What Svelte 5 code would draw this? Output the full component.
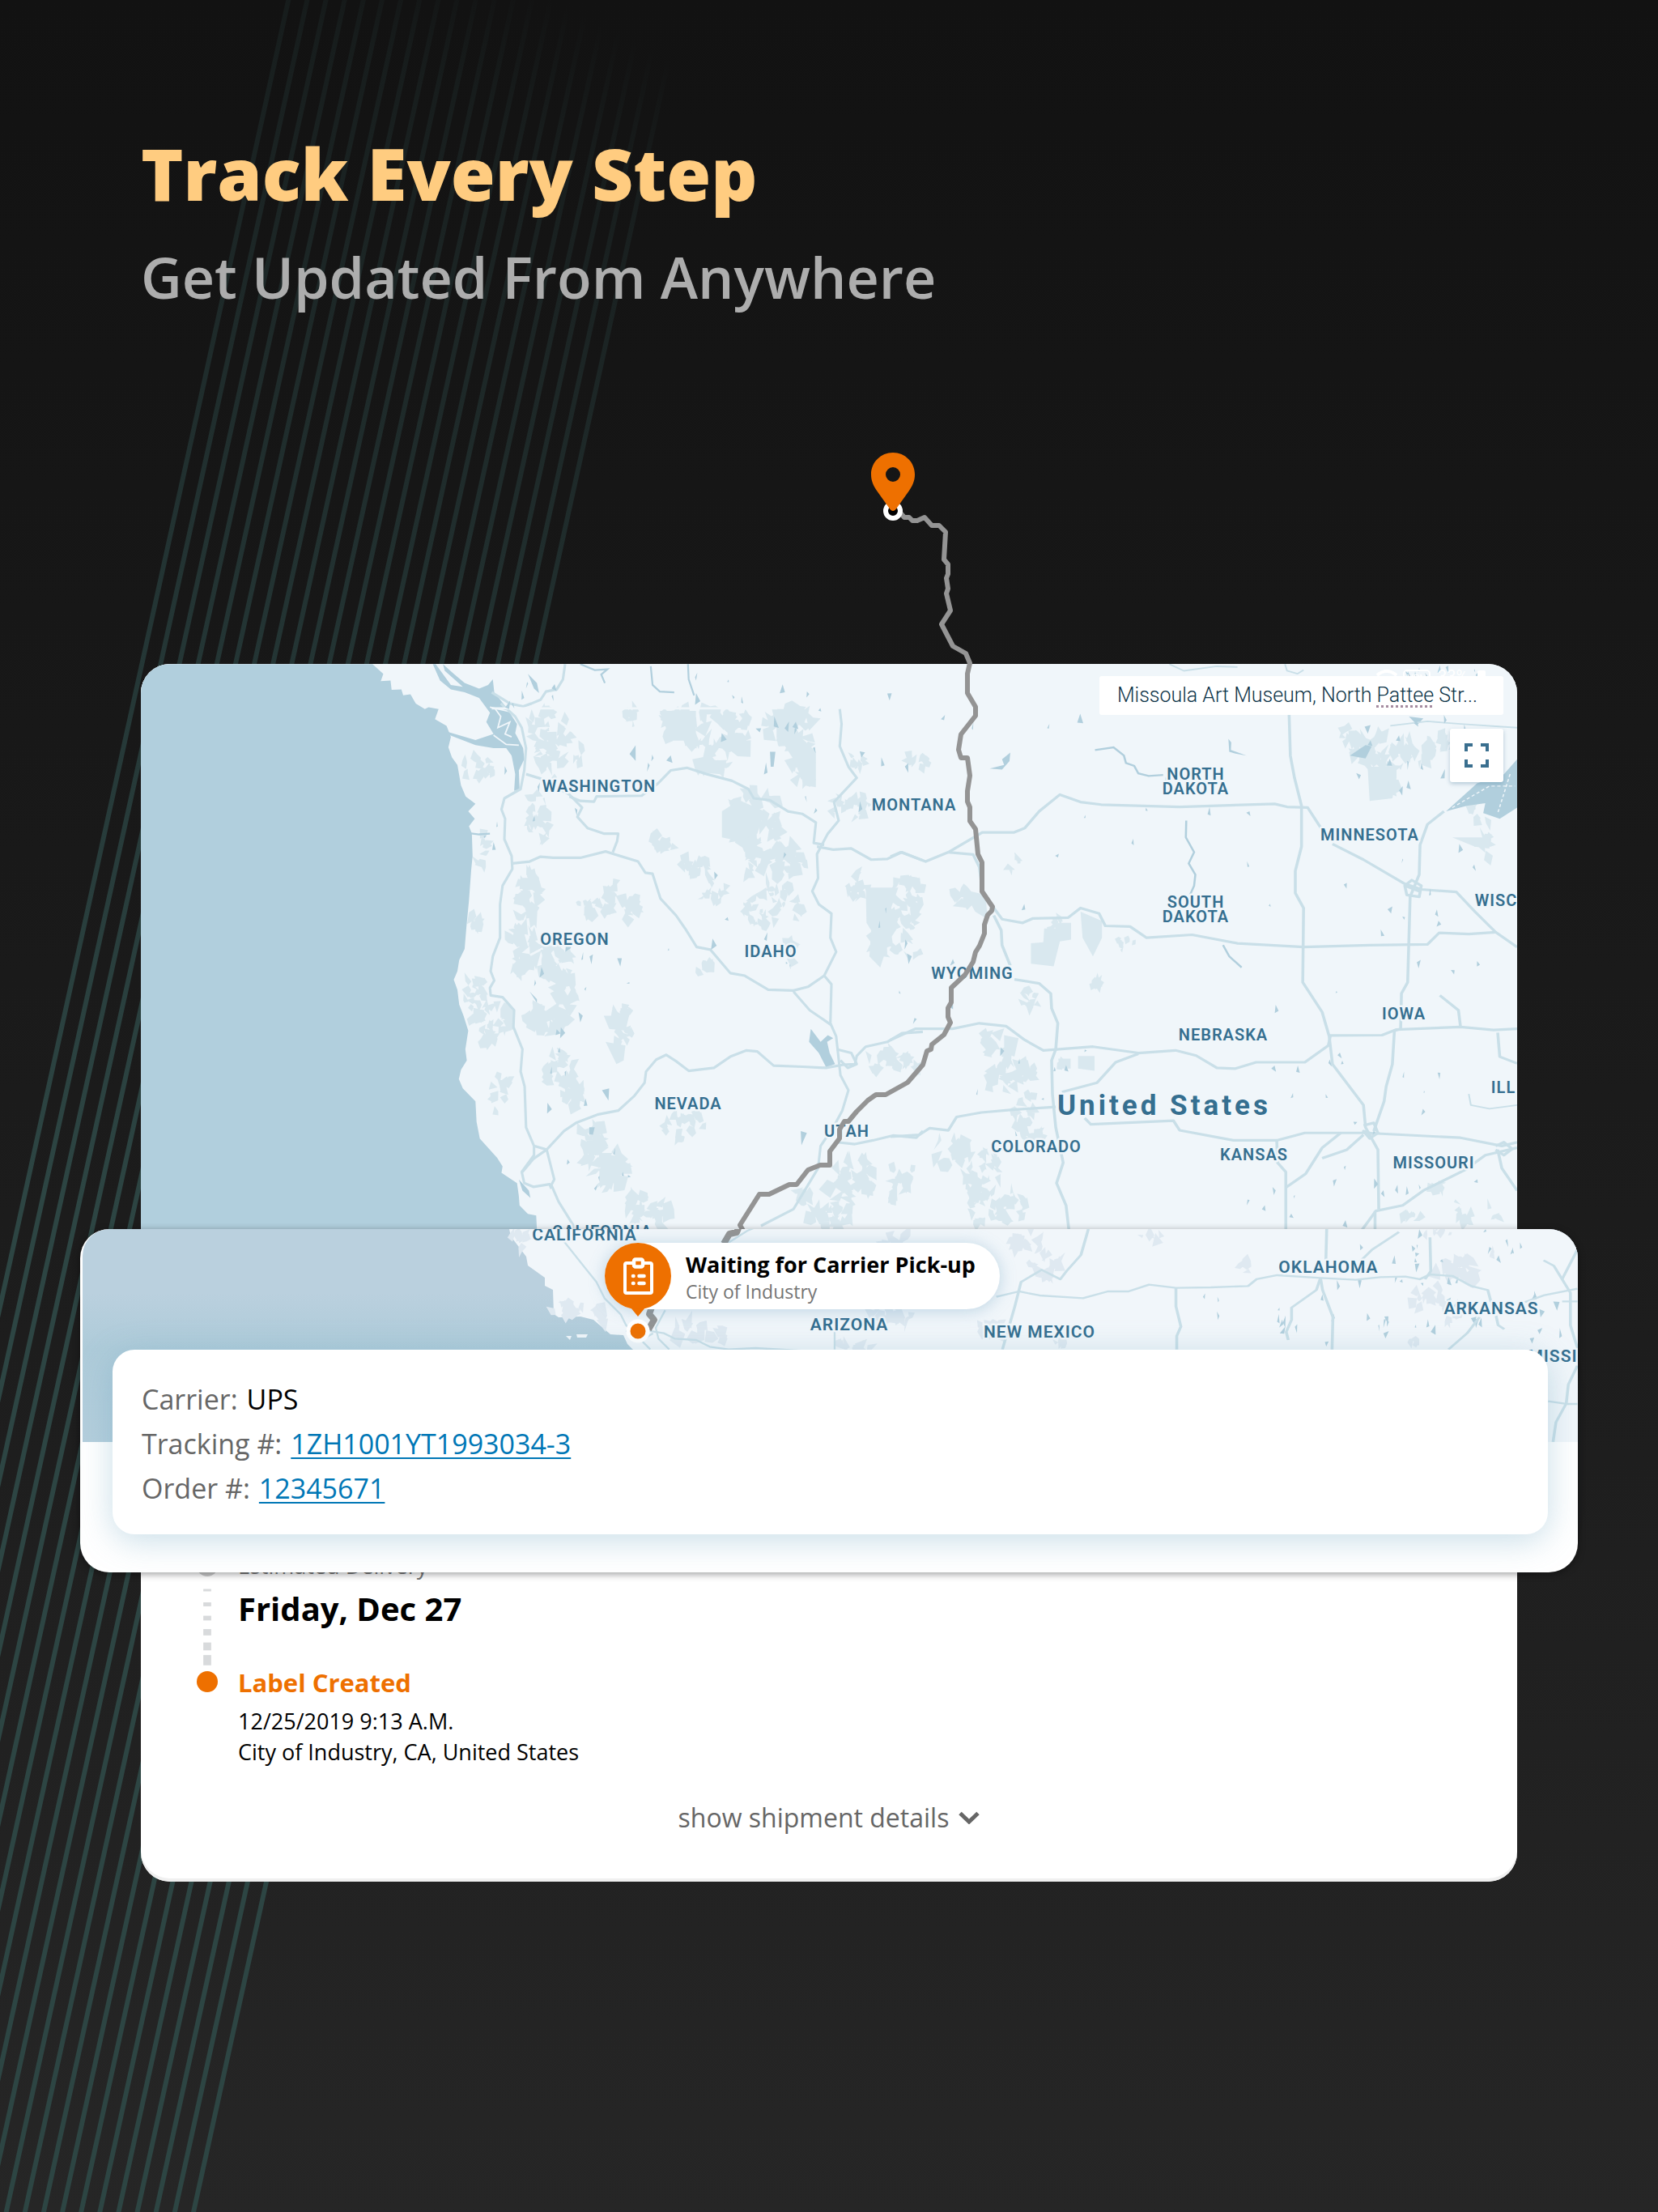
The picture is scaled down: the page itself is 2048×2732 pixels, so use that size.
<script>
  const shipment = {
    carrier: 'UPS',
    tracking: '1ZH1001YT1993034-3',
    order: '12345671',
    status: 'Waiting for Carrier Pick-up',
    city: 'City of Industry',
    estimate: 'Friday, Dec 27'
  };

  const stripes = Array.from({ length: 22 }, (_, i) => 842 - i * 23.13);
  const dashes = [[16, 3], [33, 5], [50, 6], [67, 8], [84, 10], [100, 13]];

  // road traces, one list for each map tile
  const westRoads = [
    '375,120 400,135 425,150 462,158 485,150 510,140 525,118 555,112 572,85 578,44',
    '400,150 440,185 458,215 470,270 465,330 455,380 410,405 402,435 412,460 410,515 430,560 432,595 405,640 398,690 398,780 378,830 372,870 382,895 370,915 372,935 405,940 437,975 435,1020 460,1080 455,1140 466,1180 470,1290 492,1340 527,1350',
    '470,340 510,352 590,395 625,430 612,455 640,485 685,500 725,500 722,520 710,550',
    '590,400 620,412 658,414 665,400 790,398 835,365 870,330 915,323 970,340 1040,358 1085,380 1100,405 1145,410 1195,440 1235,447 1272,470 1266,525 1295,530',
    '432,580 480,575 510,562 545,565 620,565 690,548 780,575 800,605 820,608 842,675 885,720 910,755 942,805 980,812 1035,875 1075,882 1140,920 1210,922 1250,912 1295,882',
    '1338,165 1343,205 1338,265 1362,320 1385,350 1322,415 1335,465 1305,500 1275,555 1278,620 1262,655 1280,690 1315,715 1312,780 1328,818 1295,882 1315,905 1312,1010 1328,1045 1340,1150 1362,1190 1345,1245 1320,1290 1285,1340 1278,1400 1210,1510 1120,1555',
    '1275,535 1320,543 1370,540 1425,570 1470,568 1510,550 1568,572',
    '1210,925 1255,975 1315,1015',
    '527,1350 575,1300 610,1277 670,1255 725,1245 770,1205 798,1170 802,1140 830,1108 858,1095 885,1112 920,1138 990,1130 1035,1100 1080,1083 1110,1086 1155,1124 1235,1127 1300,1130 1345,1122 1380,1120 1385,1098 1410,1073 1470,1060 1510,1037 1568,1033',
    '527,1350 548,1430 540,1445 560,1490 605,1560',
    '492,1340 492,1365 458,1410 465,1440 490,1450 535,1443 540,1455',
    '527,1350 490,1375 460,1410',
    '1330,1330 1380,1335 1430,1325 1485,1312 1550,1318 1568,1300',
    '1330,1080 1370,1090 1385,1120 1360,1130 1340,1110'
  ];
  const eastRoads = [
    '965,180 968,290 978,350 995,425 995,535 980,600 980,660 1000,700 998,900 1045,980 1062,1045 1070,1120 1145,1230 1150,1290 1180,1350 1182,1510',
    '140,550 222,497 298,497 325,485 360,440 410,395 460,415 510,422 700,428 930,420 960,428 1010,430 1045,490',
    '1070,528 1145,570 1245,635 1285,650 1370,657 1415,710 1465,765 1517,805',
    '140,550 200,556 215,590 222,650 250,700 270,730 320,740 345,728 430,726 460,700 505,715 520,748 580,750 620,780 730,772 840,795 1000,805 1160,800 1300,798 1328,767 1400,770 1465,765',
    '0,562 25,550 85,575 140,550',
    '250,720 268,760 270,800 290,855',
    '300,892 360,903 388,930 390,970 405,1010 400,1080 390,1110 392,1200 400,1290 418,1385 402,1440 425,1500 432,1568',
    '0,1055 60,1025 150,1025 215,1010 280,1018 325,1055 370,1083 490,1073 600,1090 690,1083 740,1097 790,1130 835,1132 885,1115 1003,1115 1060,1070 1065,1043 1190,1042 1225,1027 1380,1020 1460,1028 1517,1025',
    '600,1092 545,1115 500,1170 415,1195',
    '470,1265 485,1282 685,1272 700,1298 830,1325 935,1325 1003,1305 1150,1305 1380,1318 1480,1340 1517,1330',
    '1340,440 1300,475 1282,530 1280,610 1258,670 1252,900 1237,930 1235,1025 1220,1030 1215,1120 1200,1180 1195,1220 1170,1300',
    '1330,935 1375,975 1380,1020',
    '1470,1035 1475,1100 1517,1118',
    '0,1315 70,1310 95,1292 140,1298 160,1262 220,1250 290,1243 400,1235',
    '935,1325 937,1385 957,1410 957,1568',
    '957,1452 1005,1415 1045,1345 1090,1305',
    '1145,1310 1105,1350 1045,1373',
    '1517,1345 1440,1365 1390,1405 1290,1460 1240,1500 1175,1515 1140,1568',
    '1470,1350 1480,1400 1517,1460',
    '1173,1515 1173,1568',
    '1245,640 1250,665 1280,670 1285,640 1262,625 1245,640 1280,655',
    '1145,1285 1170,1278 1180,1305 1160,1320 1145,1300 1175,1310',
    '1465,1340 1485,1330 1505,1348 1485,1365 1465,1350'
  ];
  const thinRoads = [
    '1400,1200 1405,1230 1450,1240 1517,1230',
    '675,44 710,62 790,50 840,52',
    '955,44 960,62 985,70 1000,60',
    '1210,210 1300,198 1380,205 1517,215'
  ];
  const sheetRoads = [
    '60,365 115,345 165,360 270,370 330,345 380,345 430,320 495,332 580,330 670,325 690,300 740,285 845,295 930,302 990,292 1050,290 1085,300 1110,282 1165,288 1210,325 1250,340 1258,385',
    '283,114 265,210 230,270 215,300 170,265 120,310 105,400 75,560',
    '860,114 858,230',
    '845,295 835,340 775,405 775,450 762,495 767,525',
    '845,295 850,340 875,440 873,560',
    '495,332 495,400 507,475 497,510 497,560',
    '1110,145 1112,270 1098,300',
    '940,235 970,190 1035,125',
    '1385,230 1410,250 1430,300 1450,350 1450,470 1467,555',
    '1467,190 1430,300',
    '1340,385 1385,360 1467,335',
    '1430,382 1467,382',
    '1230,440 1200,500 1155,560',
    '1270,435 1275,470 1290,485',
    '1467,620 1445,690 1440,760 1415,830 1408,903',
    '1396,752 1440,762 1467,762'
  ];
  const californiaRoads = [
    '290,100 330,150 370,200 410,250 440,310 500,370 520,410 560,450 610,500',
    '600,430 660,440 700,460 780,465 830,490 900,500 1000,495 1180,505',
    '665,355 630,420 640,460 680,500',
    '520,430 570,470 620,440',
    '890,110 970,60 1030,35 1085,0',
    '1293,430 1293,500'
  ];

  const labels = [
    ['WASHINGTON', 740, 978], ['OREGON', 710, 1167], ['IDAHO', 952, 1182],
    ['NEVADA', 850, 1370], ['UTAH', 1046, 1404], ['MONTANA', 1129, 1001],
    ['NORTH', 1477, 963], ['DAKOTA', 1477, 981], ['SOUTH', 1477, 1121],
    ['DAKOTA', 1477, 1139], ['MINNESOTA', 1692, 1038], ['WYOMING', 1201, 1209],
    ['IOWA', 1734, 1259], ['NEBRASKA', 1511, 1285], ['COLORADO', 1280, 1423],
    ['KANSAS', 1549, 1433], ['MISSOURI', 1771, 1443], ['WISC', 1848, 1119],
    ['ILL', 1857, 1350], ['CALIFORNIA', 744, 1528]
  ];
  const sheetLabels = [
    ['CALIFORNIA', 722, 1532], ['ARIZONA', 1049, 1643], ['NEW MEXICO', 1284, 1652],
    ['OKLAHOMA', 1641, 1572], ['ARKANSAS', 1842, 1623], ['MISSI', 1918, 1682]
  ];

  // [centre x, centre y, radius x, radius y, patches, patch size]
  const forests = [
    [680, 900, 26, 26, 26, 10], [690, 935, 30, 28, 24, 9], [592, 945, 22, 14, 14, 9],
    [840, 895, 22, 20, 16, 10], [885, 905, 45, 32, 40, 13], [880, 945, 24, 10, 12, 10],
    [975, 900, 34, 26, 26, 13], [990, 945, 16, 24, 14, 11], [780, 885, 8, 14, 6, 8],
    [665, 1010, 14, 34, 18, 10], [595, 1050, 8, 22, 7, 9], [586, 1130, 7, 18, 6, 9],
    [930, 1015, 36, 40, 40, 12], [960, 1070, 42, 28, 32, 12], [860, 1070, 26, 14, 14, 10],
    [815, 1045, 18, 12, 10, 10], [880, 1100, 20, 16, 12, 8], [955, 1125, 38, 26, 30, 9],
    [975, 1175, 12, 14, 8, 9], [655, 1100, 12, 36, 22, 12], [645, 1170, 16, 40, 26, 12],
    [685, 1190, 20, 26, 20, 12], [700, 1225, 16, 24, 18, 12], [765, 1115, 26, 22, 18, 11],
    [730, 1120, 20, 10, 8, 9], [585, 1225, 14, 22, 14, 9], [605, 1262, 26, 26, 28, 10],
    [675, 1260, 28, 14, 22, 12], [690, 1320, 22, 20, 22, 10], [710, 1350, 18, 20, 16, 11],
    [770, 1250, 14, 8, 8, 9], [770, 1280, 12, 18, 9, 8], [870, 1195, 12, 8, 6, 9],
    [620, 1350, 14, 26, 12, 8], [725, 1410, 20, 26, 20, 12], [755, 1450, 22, 26, 22, 12],
    [790, 1490, 18, 20, 16, 11], [820, 1500, 18, 12, 10, 11], [845, 1385, 24, 30, 16, 8],
    [1040, 995, 16, 14, 9, 8], [1062, 995, 20, 14, 10, 9], [1060, 1095, 16, 20, 10, 9],
    [1110, 1115, 22, 30, 14, 11], [1090, 1160, 24, 28, 12, 11], [1125, 1150, 14, 34, 12, 10],
    [1130, 1100, 10, 20, 10, 8], [1100, 1310, 30, 12, 16, 10], [1045, 1470, 24, 36, 22, 12],
    [1030, 1500, 34, 18, 20, 11], [1070, 1450, 16, 20, 12, 11], [985, 1478, 18, 10, 8, 9],
    [1115, 1450, 14, 18, 8, 9], [1120, 1318, 18, 10, 8, 10], [1230, 1290, 16, 16, 10, 11],
    [1250, 1330, 34, 22, 26, 11], [1265, 1370, 16, 22, 14, 10], [1175, 1420, 22, 20, 16, 11],
    [1215, 1450, 26, 34, 30, 10], [1245, 1490, 24, 22, 22, 9], [1110, 1470, 12, 16, 8, 9],
    [1275, 1400, 14, 10, 10, 8], [1270, 1235, 14, 10, 8, 9], [1315, 1313, 6, 8, 3, 9],
    [1205, 1500, 10, 22, 9, 9], [1350, 1215, 12, 8, 6, 8], [1135, 940, 18, 8, 10, 8],
    [1060, 940, 16, 8, 8, 7], [1695, 925, 30, 18, 22, 13], [1715, 960, 20, 18, 14, 12],
    [1745, 930, 24, 16, 18, 11], [1780, 915, 24, 8, 12, 11], [1665, 905, 10, 12, 6, 10],
    [1835, 1040, 8, 26, 8, 9], [1820, 1000, 10, 16, 5, 9], [1775, 1465, 12, 10, 5, 10],
    [1825, 1495, 40, 16, 10, 10], [1740, 1505, 16, 10, 6, 9], [1310, 1145, 12, 12, 8, 8],
    [1255, 1070, 10, 10, 5, 10], [1391, 1165, 12, 10, 6, 6], [1190, 1105, 14, 10, 8, 11]
  ];
  const sheetForests = [
    [1265, 1530, 22, 14, 14, 10], [1290, 1560, 20, 22, 14, 11], [1110, 1535, 22, 14, 10, 10],
    [640, 1530, 10, 14, 7, 9], [700, 1615, 20, 12, 10, 10], [740, 1625, 14, 10, 7, 10],
    [850, 1645, 22, 14, 8, 11], [885, 1650, 14, 12, 6, 10], [1100, 1625, 30, 12, 12, 12],
    [1050, 1660, 24, 8, 9, 12], [1225, 1645, 24, 12, 10, 10], [1800, 1570, 26, 12, 12, 12],
    [1765, 1605, 24, 16, 14, 9], [1790, 1628, 26, 6, 8, 8], [1423, 1528, 14, 5, 5, 9],
    [1538, 1565, 6, 8, 3, 9], [1845, 1548, 6, 6, 3, 7], [1770, 1522, 24, 4, 6, 7],
    [1745, 1658, 6, 5, 3, 8], [1305, 1660, 10, 5, 4, 8]
  ];
  const lakes = [
    [640, 860, 60, 20, 6, 7], [870, 850, 160, 24, 7, 7], [900, 930, 120, 40, 10, 9],
    [650, 1000, 70, 60, 7, 6], [1050, 960, 90, 60, 8, 7], [720, 1220, 60, 60, 8, 7],
    [960, 1140, 150, 90, 8, 7], [690, 1330, 50, 60, 7, 7], [740, 1440, 60, 50, 6, 7],
    [1150, 880, 200, 40, 8, 7], [1780, 850, 80, 26, 26, 8], [1750, 930, 90, 50, 16, 8],
    [1420, 1060, 200, 120, 10, 6], [1760, 1130, 110, 110, 12, 6], [1680, 1280, 160, 120, 16, 6],
    [1700, 1480, 160, 40, 14, 6], [1260, 1330, 120, 80, 8, 6], [1130, 1180, 100, 90, 8, 7]
  ];
  const sheetLakes = [
    [1780, 1540, 100, 26, 16, 7], [1750, 1610, 120, 40, 16, 7], [1660, 1640, 120, 24, 12, 8],
    [1560, 1600, 120, 60, 6, 6], [1900, 1640, 30, 50, 7, 8]
  ];

  function scatter(regions, seed, thin) {
    let state = seed;
    const rand = () => {
      state = (state * 16807) % 2147483647;
      return state / 2147483647;
    };
    let d = '';
    for (const [cx, cy, rx, ry, count, size] of regions) {
      for (let i = 0; i < count; i++) {
        const angle = rand() * Math.PI * 2;
        const reach = Math.sqrt(rand());
        const x = cx + Math.cos(angle) * rx * reach;
        const y = cy + Math.sin(angle) * ry * reach;
        const corners = thin ? 3 : 3 + Math.floor(rand() * 4);
        const turn = rand() * Math.PI;
        for (let k = 0; k < corners; k++) {
          const a = turn + (k / corners) * Math.PI * 2;
          const r = size * (0.15 + rand() * 1.15);
          const px = x + Math.cos(a) * r * (thin ? 0.5 : 0.8);
          const py = y + Math.sin(a) * r;
          d += `${k ? 'L' : 'M'}${px.toFixed(1)} ${py.toFixed(1)}`;
        }
        d += 'Z';
      }
    }
    return d;
  }

  const forestPath = scatter(forests, 71, false);
  const lakePath = scatter(lakes, 19, true);
  const sheetForestPath = scatter(sheetForests, 37, false);
  const sheetLakePath = scatter(sheetLakes, 53, true);
</script>

<main>
  <svg class="stripes" viewBox="0 0 2048 2732" preserveAspectRatio="xMinYMin slice" aria-hidden="true">
    <defs>
      <linearGradient id="fade" gradientUnits="userSpaceOnUse" x1="840" y1="80" x2="100" y2="1500">
        <stop offset="0" stop-color="#2a4544" stop-opacity="0" />
        <stop offset="0.1" stop-color="#2a4544" stop-opacity="0.2" />
        <stop offset="0.5" stop-color="#2a4544" stop-opacity="0.6" />
        <stop offset="1" stop-color="#2d4543" />
      </linearGradient>
    </defs>
    {#each stripes as x}
      <path d="M{x + 3} 0H{x - 3}L{x - 606} 2732H{x - 600}Z" fill="url(#fade)" />
    {/each}
  </svg>

  <header>
    <h1>Track Every Step</h1>
    <p>Get Updated From Anywhere</p>
  </header>

  <section class="card">
    <div class="map">
      <svg class="terrain" viewBox="174 820 1700 698" role="img" aria-label="Map of the western United States">
        <rect x="174" y="820" width="1700" height="720" fill="#f0f6fa" />
        <path class="forest" d={forestPath} />
        <g transform="translate(440 800) scale(0.4464 0.4592)">
          <path class="forest" d="M1410 645H1500L1480 700 1500 730 1470 800 1450 860 1420 830 1425 760 1412 740ZM1012 440 1060 410 1130 440 1110 500 1060 520 1012 510ZM1150 165H1190L1230 240 1272 280V375L1240 370 1210 300 1170 240ZM685 990H755L745 1030 700 1025ZM690 1060 745 1070 740 1110 720 1120ZM840 170H940V250H870ZM930 300 980 290 1010 340 940 335Z" />
          <path class="water" d="M-600 44H45L75 70 68 90 95 88 98 113 125 112 130 128 150 125 165 150 190 165 200 160 228 165 218 192 250 210 262 240 255 268 265 295 280 315 290 370 303 400 330 420 310 440 328 460 312 480 320 500 322 560 318 600 312 680 305 750 300 810 285 840 280 870 270 893 280 920 285 960 297 990 310 1030 302 1080 306 1110 290 1135 284 1160 295 1185 330 1220 333 1275 342 1320 390 1372 405 1395 402 1412 445 1440 450 1475 452 1500 475 1523 498 1527 502 1600H-600Z" />
          <path class="water" d="M240 44 270 70 300 95 340 110 365 100 378 85 382 120 415 160 445 205 440 230 462 270 465 300 450 330 452 380 437 385 440 340 430 290 415 270 380 270 330 262 250 232 252 226 330 248 380 232 360 200 370 175 340 135 300 120 262 112 232 88 212 44 220 44 262 100 295 105 245 62Z" />
          <path class="water" d="M1258 1025 1285 1060 1305 1042 1320 1050 1303 1060 1310 1090 1325 1120 1300 1128 1280 1090 1253 1060ZM1145 280 1160 280 1155 320 1147 320ZM475 70 500 95 506 122 492 110ZM680 1190 700 1185 698 1218ZM1230 1300 1247 1305 1232 1338ZM480 925 500 945 500 955ZM615 980 627 990 620 1008ZM645 1290 660 1290 655 1310 645 1308ZM450 1430 478 1460 482 1480 460 1460Z" />
          <path d="M385 165 400 185 392 215 425 200 412 232 430 240M380 235 415 260 450 262M370 160 440 175" fill="none" stroke="#f0f6fa" stroke-width="4" />
          <path d="M305 498 340 502 370 500" fill="none" stroke="#b1cfdd" stroke-width="5" />
          <g class="roads">
            {#each westRoads as points}
              <polyline {points} />
            {/each}
          </g>
          <path class="stream" d="M620 44 660 60 695 58 678 72 688 95M815 50 820 100 840 118 880 120M918 44 920 85 935 128" />
          <path class="halo-line" d="M375 163H1165" />
        </g>
        <g transform="translate(1100 800) scale(0.5102 0.4592)">
          <path class="forest" d="M340 795 370 792 372 755 400 755 405 740H437V785L410 790 395 857 340 850ZM460 710 512 735V780L490 830 465 780ZM1155 320H1225V350L1215 405 1160 412ZM1360 510H1450V540L1415 535ZM454 1098 494 1098 494 1138 454 1132ZM406 1105 436 1105 436 1132 410 1132ZM175 650 230 665 235 730 205 710ZM275 1042 310 1050 300 1100 275 1090Z" />
          <path class="water" d="M1517 300 1485 340 1420 365 1345 440 1395 425 1440 418 1435 445 1475 460 1517 430ZM1112 290 1150 262 1165 265 1150 298ZM240 325 275 315 270 300 290 282 288 305 270 328ZM818 245 825 255 824 275 862 290 835 285 820 280ZM1255 185 1290 190 1275 208Z" />
          <path d="M1360 430 1450 372 1512 372M1500 340 1470 445" fill="none" stroke="#f0f6fa" stroke-width="3" stroke-dasharray="8 6" />
          <path class="stream" d="M495 275 540 268 565 290 570 310 590 318 600 338 625 345 660 342M716 465 715 510 735 550 722 580 738 610 735 640 725 665M805 800 820 830 850 860" />
          <g class="roads">
            {#each eastRoads as points}
              <polyline {points} />
            {/each}
          </g>
          <g class="roads thin">
            {#each thinRoads as points}
              <polyline {points} />
            {/each}
          </g>
        </g>
        <path class="water" d={lakePath} />
        <g class="labels">
          {#each labels as [name, x, y]}
            <text {x} {y}>{name}</text>
          {/each}
          <text class="country" x="1438" y="1377">United States</text>
        </g>
        <g class="status">
          <path d="M1701 834Q1713 824 1725 834" fill="none" stroke="#fff" stroke-width="4" />
          <rect x="1734" y="828" width="32" height="18" rx="4" fill="none" stroke="#fff" stroke-width="2" />
          <text class="vpn" x="1738" y="842">VPN</text>
          <text x="1776" y="842">33%</text>
          <rect x="1825" y="828" width="10" height="14" rx="2" fill="#fff" />
        </g>
      </svg>

      <svg class="route" viewBox="174 820 1700 698" aria-hidden="true">
        <polyline points="1105,631 1111,632 1117,639 1123,639 1127,643 1133,643 1142,639 1151,649 1160,649 1168,657 1166,691 1171,697 1171,709 1169,714 1171,727 1169,733 1174,754 1163,771 1177,798 1193,807 1198,819 1195,832 1195,856 1205,873 1205,884 1187,907 1184,926 1187,936 1195,936 1198,958 1195,977 1195,990 1198,997 1198,1014 1205,1024 1208,1055 1213,1065 1213,1101 1226,1120 1225,1125 1220,1130 1216,1142 1216,1153 1210,1168 1205,1176 1202,1188 1192,1204 1175,1220 1175,1238 1171,1245 1171,1256 1174,1263 1166,1278 1151,1290 1150,1296 1145,1298 1140,1315 1121,1337 1094,1352 1082,1352 1072,1359 1058,1373 1048,1385 1043,1385 1037,1395 1037,1406 1025,1422 1025,1439 1013,1439 998,1445 984,1463 975,1463 950,1475 938,1475 914,1513 918,1520" />
        <circle cx="1103" cy="631" r="9" fill="#000" stroke="#fff" stroke-width="6" />
        <path d="M1103 559C1088 559 1076 571 1076 586C1076 594 1079 600 1083 606L1098 627Q1103 635 1108 627L1123 606C1127 600 1130 594 1130 586C1130 571 1118 559 1103 559ZM1103 577A9 9 0 1 1 1103 595A9 9 0 1 1 1103 577Z" fill="#ee7000" fill-rule="evenodd" />
      </svg>

      <div class="tools">
        <p class="place">Missoula Art Museum, North <span>Pattee</span> Str...</p>
        <button class="fullscreen" type="button" aria-label="Full screen">
          <svg viewBox="0 0 30 30" width="30" height="30">
            <path d="M2 10V2H10M20 2H28V10M28 20V28H20M10 28H2V20" fill="none" stroke="#3a6f8f" stroke-width="4" />
          </svg>
        </button>
      </div>
    </div>

    <article class="sheet">
      <svg class="terrain" viewBox="102 1518 1847 263" aria-hidden="true">
        <defs>
          <linearGradient id="sea" x1="0" y1="0" x2="0" y2="1">
            <stop offset="0.3" stop-color="#bad0de" />
            <stop offset="0.56" stop-color="#aecbd9" />
            <stop offset="1" stop-color="#b4cedc" />
          </linearGradient>
        </defs>
        <rect x="102" y="1518" width="1847" height="263" fill="url(#sea)" />
        <path d="M629 1518 631 1527 650 1552 652 1563 673 1578 673 1588 683 1593 684 1623 690 1627 717 1626 733 1630 747 1642 754 1648 770 1649 775 1660 782 1667 1000 1781H1949V1518Z" fill="#f1f6fa" />
        <path d="M699 1650 706 1650 704 1655ZM712 1648 726 1648 724 1652 713 1652Z" fill="#f1f6fa" />
        <path class="forest" d={sheetForestPath} />
        <path class="water" d={sheetLakePath} />
        <g class="roads" transform="translate(1200 1480) scale(0.5102 0.3333)">
          {#each sheetRoads as points}
            <polyline {points} />
          {/each}
        </g>
        <g class="roads" transform="translate(600 1500) scale(0.3333 0.3333)">
          {#each californiaRoads as points}
            <polyline {points} />
          {/each}
        </g>
        <polyline class="leg" points="914,1512 910,1522 901,1524 894,1536" />
        <polyline class="leg" points="806,1612 802,1623 808,1630 801,1642" />
        <g class="labels large">
          {#each sheetLabels as [name, x, y]}
            <text {x} {y}>{name}</text>
          {/each}
        </g>
      </svg>

      <div class="callout">
        <svg viewBox="0 0 82 82" width="82" height="82" aria-hidden="true">
          <circle cx="41" cy="109" r="12" fill="#ee7000" stroke="#fff" stroke-width="5" />
          <path d="M32 80H50L41 91Z" fill="#ee7000" />
          <circle cx="41" cy="41" r="41" fill="#ee7000" />
          <rect x="25" y="25" width="33" height="37" rx="2" fill="none" stroke="#fff" stroke-width="4" />
          <rect x="36" y="20.5" width="11" height="9" rx="2" fill="#ee7000" stroke="#fff" stroke-width="4.5" />
          <path d="M35 41H35.5M42.5 41H48.5M35 50H35.5M42.5 50H48.5" stroke="#fff" stroke-width="4.6" stroke-linecap="round" />
        </svg>
        <div>
          <strong>{shipment.status}</strong>
          <small>{shipment.city}</small>
        </div>
      </div>

      <dl class="info">
        <div>
          <dt>Carrier:</dt>
          <dd>{shipment.carrier}</dd>
        </div>
        <div>
          <dt>Tracking #:</dt>
          <dd><a href="#tracking">{shipment.tracking}</a></dd>
        </div>
        <div>
          <dt>Order #:</dt>
          <dd><a href="#order">{shipment.order}</a></dd>
        </div>
      </dl>
    </article>

    <ol class="timeline">
      <li class="estimate">
        <div class="marker">
          <span class="dot"></span>
          <svg viewBox="0 0 10 114" width="10" height="114" aria-hidden="true">
            {#each dashes as [y, height]}
              <rect x="0" {y} width="10" {height} fill="#d8dadc" />
            {/each}
          </svg>
        </div>
        <div>
          <p class="hint">Estimated Delivery</p>
          <h2>{shipment.estimate}</h2>
        </div>
      </li>
      <li>
        <div class="marker">
          <span class="dot active"></span>
        </div>
        <div>
          <h3>Label Created</h3>
          <p>12/25/2019 9:13 A.M.</p>
          <p>City of Industry, CA, United States</p>
        </div>
      </li>
    </ol>

    <button class="more" type="button">
      show shipment details
      <svg viewBox="0 0 26 16" width="26" height="16" aria-hidden="true">
        <path d="M2 2.5 13 13 24 2.5" fill="none" stroke="#666" stroke-width="5" />
      </svg>
    </button>
  </section>
</main>

<style>
  :global(body) {
    margin: 0;
  }

  main {
    position: relative;
    box-sizing: border-box;
    min-height: 100vh;
    padding: 154px 174px 120px;
    overflow: hidden;
    background: linear-gradient(#121212, #181818 33%, #1e1e1e 66%, #262626);
    color: #000;
    font-family: 'Open Sans', sans-serif;
  }

  h1,
  h2,
  h3,
  p,
  dl,
  dd,
  ol {
    margin: 0;
    padding: 0;
  }

  svg {
    display: block;
  }

  .stripes {
    position: absolute;
    inset: 0;
    width: 100%;
    height: 100%;
  }

  header {
    position: relative;
    margin-bottom: 430px;
  }

  h1 {
    margin-bottom: 20px;
    color: #ffcc80;
    font-size: 89px;
    font-weight: 800;
    line-height: 120px;
  }

  header p {
    color: #adadad;
    font-size: 70px;
    font-weight: 600;
    line-height: 96px;
  }

  .card {
    position: relative;
    padding-bottom: 57px;
    border-radius: 36px;
    background: #fff;
    box-shadow: inset 0 -4px 0 #f0f0f0;
  }

  .map {
    position: relative;
  }

  .terrain {
    width: 100%;
    height: auto;
  }

  .map .terrain {
    border-radius: 36px 36px 0 0;
  }

  .forest {
    fill: #d9e8ef;
  }

  .water {
    fill: #b1cfdd;
  }

  .stream {
    fill: none;
    stroke: #b1cfdd;
    stroke-width: 5;
  }

  .halo-line {
    fill: none;
    stroke: #f0f6fa;
    stroke-width: 6;
  }

  .roads {
    fill: none;
    stroke: #c9dfe8;
    stroke-width: 7;
    stroke-linejoin: round;
  }

  .thin {
    stroke-width: 4;
  }

  .labels {
    fill: #356f90;
    stroke: #f0f6fa;
    stroke-width: 5px;
    stroke-linejoin: round;
    paint-order: stroke;
    font-family: Roboto, sans-serif;
    font-size: 20px;
    font-weight: 600;
    letter-spacing: 1px;
    text-anchor: middle;
  }

  .large {
    font-size: 21px;
  }

  .country {
    font-size: 35px;
    font-weight: 700;
    letter-spacing: 4px;
  }

  .status {
    fill: #fff;
    font-family: Roboto, sans-serif;
    font-size: 20px;
  }

  .vpn {
    font-size: 12px;
  }

  .route {
    position: absolute;
    inset: 0;
    width: 100%;
    height: 100%;
    overflow: visible;
  }

  .route polyline,
  .leg {
    fill: none;
    stroke: #949494;
    stroke-width: 6;
    stroke-linejoin: round;
  }

  .leg {
    stroke-width: 8;
  }

  .tools {
    position: absolute;
    top: 15px;
    right: 17px;
    display: flex;
    flex-direction: column;
    align-items: flex-end;
    gap: 17px;
  }

  .place {
    padding: 0 32px 0 22px;
    border-radius: 3px;
    background: #fff;
    color: #0c3347;
    font-family: Roboto, sans-serif;
    font-size: 25px;
    font-weight: 300;
    line-height: 48px;
    white-space: nowrap;
  }

  .place span {
    text-decoration: underline dotted #a58ca0 3px;
    text-underline-offset: 4px;
  }

  .fullscreen {
    display: grid;
    place-items: center;
    width: 66px;
    height: 66px;
    padding: 0;
    border: 0;
    border-radius: 3px;
    background: #fff;
    box-shadow: 0 2px 5px rgba(58, 111, 143, 0.35);
  }

  .sheet {
    position: relative;
    z-index: 1;
    margin: 0 -75px;
    padding-bottom: 47px;
    border-left: 3px solid #fff;
    border-radius: 36px;
    background: #fff;
    box-shadow: 0 2px 10px rgba(0, 0, 0, 0.4);
  }

  .sheet .terrain {
    border-radius: 33px 36px 0 0;
  }

  .sheet .forest {
    fill: #dfe9f1;
  }

  .callout {
    position: absolute;
    top: 17px;
    left: 645px;
    display: flex;
    gap: 18px;
    height: 82px;
    padding-right: 30px;
    border-radius: 41px;
    background: #fff;
    box-shadow: 0 2px 20px rgba(90, 150, 185, 0.35);
  }

  .callout svg {
    overflow: visible;
  }

  .callout strong,
  .callout small {
    display: block;
    white-space: nowrap;
  }

  .callout strong {
    padding-top: 8px;
    font-size: 27px;
    font-weight: 700;
    line-height: 38px;
  }

  .callout small {
    color: #757575;
    font-size: 23px;
    line-height: 28px;
  }

  .info {
    position: relative;
    margin: -114px 37px 0;
    padding: 34px 36px 29px;
    border-radius: 27px;
    background: #fff;
    box-shadow: 0 8px 40px rgba(100, 160, 190, 0.35);
    font-size: 34px;
    line-height: 55px;
  }

  .info div {
    display: flex;
    gap: 11px;
  }

  .info dt {
    color: #666;
  }

  .info a {
    color: #0077b6;
    text-decoration-thickness: 2px;
    text-underline-offset: 4px;
  }

  .timeline {
    margin-top: -26px;
    padding: 0 69px;
    list-style: none;
    font-size: 27px;
    line-height: 38px;
  }

  .timeline li {
    display: flex;
    gap: 25px;
  }

  .timeline .estimate {
    height: 142px;
  }

  .marker {
    display: flex;
    flex-direction: column;
    align-items: center;
    padding-top: 6px;
  }

  .dot {
    width: 26px;
    height: 26px;
    border-radius: 50%;
    background: #ccc;
  }

  .dot.active {
    background: #ee7000;
  }

  .hint {
    margin-bottom: 9px;
    color: #757575;
    font-size: 27px;
    line-height: 36px;
  }

  h2 {
    font-size: 40px;
    font-weight: 700;
    line-height: 52px;
  }

  h3 {
    margin-bottom: 9px;
    color: #ee7000;
    font-size: 31px;
    font-weight: 700;
    line-height: 40px;
  }

  .more {
    display: flex;
    align-items: center;
    gap: 12px;
    margin: 40px auto 0;
    padding: 0;
    border: 0;
    background: none;
    color: #666;
    font: 32px/44px 'Open Sans', sans-serif;
  }
</style>
